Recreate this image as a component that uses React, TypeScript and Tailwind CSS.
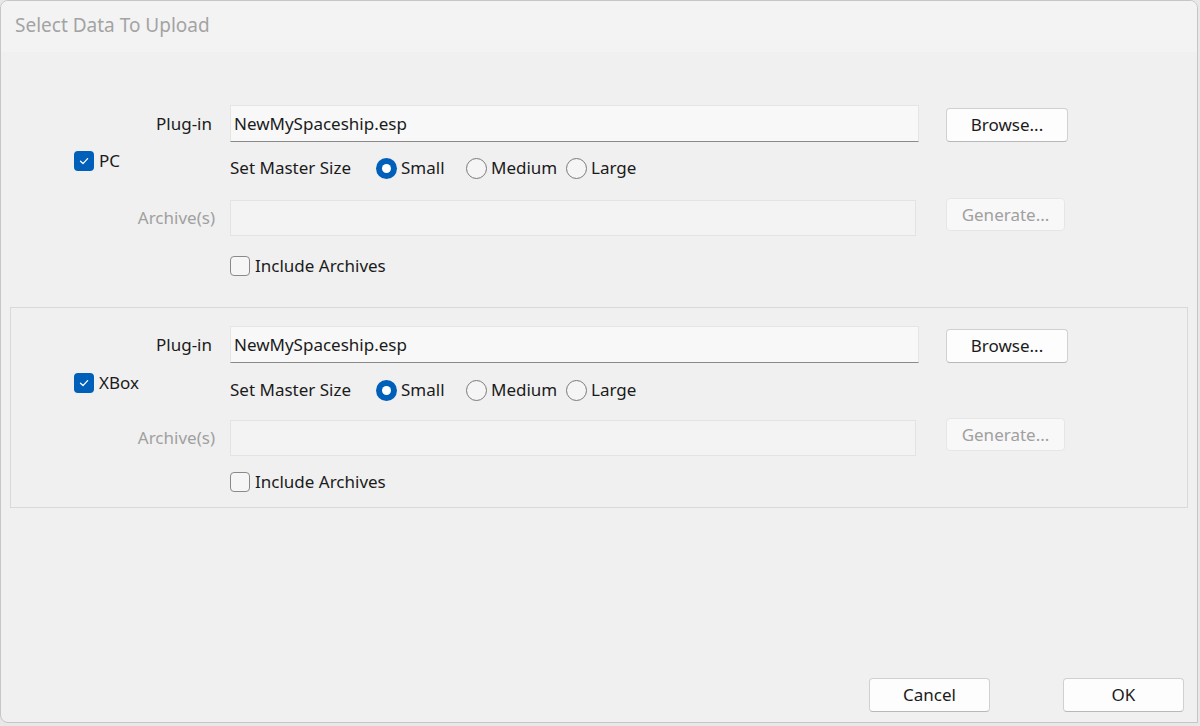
import React from "react";

const FONT = { fontFamily: '"Noto Sans", "Open Sans", sans-serif' };

function Check({ checked }: { checked: boolean }) {
  if (checked) {
    return (
      <span className="flex h-[20px] w-[20px] items-center justify-center rounded-[4px] bg-[#005fb8]">
        <svg width="12" height="12" viewBox="0 0 12 12" fill="none">
          <path d="M2.5 6.3 L5 8.6 L9.6 3.6" stroke="#ffffff" strokeWidth="1.3" strokeLinecap="round" strokeLinejoin="round" />
        </svg>
      </span>
    );
  }
  return <span className="block h-[20px] w-[20px] rounded-[4px] border border-[#8a8a8a] bg-[#f6f6f6]" />;
}

function Radio({ label, selected }: { label: string; selected?: boolean }) {
  return (
    <span className="flex items-center gap-[4px]">
      {selected ? (
        <span className="flex h-[21px] w-[21px] items-center justify-center rounded-full bg-[#005fb8]">
          <span className="block h-[9px] w-[9px] rounded-full bg-white" />
        </span>
      ) : (
        <span className="block h-[21px] w-[21px] rounded-full border border-[#7a7a7a] bg-[#f5f5f5]" />
      )}
      <span>{label}</span>
    </span>
  );
}

function Button({ children, disabled, w }: { children: React.ReactNode; disabled?: boolean; w: string }) {
  return (
    <button
      className={
        disabled
          ? `h-[33px] ${w} rounded-[4px] border border-[#e6e6e6] bg-[#f8f8f8] text-[#a0a0a0]`
          : `h-[34px] ${w} rounded-[4px] border border-[#d0d0d0] border-b-[#b8b8b8] bg-[#fdfdfd] text-[#1b1b1b]`
      }
    >
      {children}
    </button>
  );
}

function Platform({ name, bordered }: { name: string; bordered?: boolean }) {
  return (
    <div
      className={
        bordered
          ? "border border-[#d9d9d9] pt-[18px] pb-[10px]"
          : "border border-transparent pt-[18px] pb-[10px]"
      }
    >
      {/* plug-in */}
      <div className="flex h-[37px] items-center">
        <div className="w-[219px] pr-[18px] text-right">Plug-in</div>
        <div className="flex h-[37px] w-[689px] items-center border border-[#e5e5e5] border-b-[#8a8a8a] bg-[#f8f8f8] pl-[3px]">
          NewMySpaceship.esp
        </div>
        <div className="ml-[27px] pt-[2px]">
          <Button w="w-[122px]">Browse...</Button>
        </div>
      </div>

      {/* master size */}
      <div className={bordered ? "mt-[11px] flex h-[32px] items-center" : "mt-[10px] flex h-[32px] items-center"}>
        <div className="flex w-[219px] -translate-y-[7px] items-center gap-[5px] pl-[63px]">
          <Check checked />
          <span>{name}</span>
        </div>
        <span className="w-[146px]">Set Master Size</span>
        <div className="flex items-center">
          <div className="w-[90px]">
            <Radio label="Small" selected />
          </div>
          <div className="w-[100px]">
            <Radio label="Medium" />
          </div>
          <Radio label="Large" />
        </div>
      </div>

      {/* archives */}
      <div className={bordered ? "mt-[12px] flex items-start" : "mt-[14px] flex items-start"}>
        <div className="mt-[2px] flex h-[36px] w-[219px] items-center justify-end pr-[15px] text-[#a0a0a0]">
          Archive(s)
        </div>
        <div className="mt-[2px] h-[36px] w-[686px] border border-[#e3e3e3] bg-[#f3f3f3]" />
        <div className="ml-[30px]">
          <Button w="w-[119px]" disabled>
            Generate...
          </Button>
        </div>
      </div>

      {/* include */}
      <div className={bordered ? "mt-[11px] flex h-[30px] items-center" : "mt-[15px] flex h-[30px] items-center"}>
        <div className="w-[219px]" />
        <span className="flex items-center gap-[5px]">
          <Check checked={false} />
          <span>Include Archives</span>
        </span>
      </div>
    </div>
  );
}

export default function App() {
  return (
    <div className="h-[726px] w-[1200px] overflow-hidden bg-[#e8e8e8] text-[17px] text-[#1b1b1b]" style={FONT}>
      <div className="flex h-[723px] w-[1198px] flex-col overflow-hidden rounded-t-[8px] rounded-bl-[8px] border border-[#c6c6c6] bg-[#f0f0f0]">
        <div className="flex h-[51px] items-center bg-[#f3f3f3] pl-[14px] pb-[2px] text-[19px] text-[#a3a3a3]">
          Select Data To Upload
        </div>

        <div className="mt-[34px] px-[9px]">
          <Platform name="PC" />
          <div className="mt-[15px]">
            <Platform name="XBox" bordered />
          </div>
        </div>

        <div className="mt-auto mb-[10px] flex justify-end gap-[73px] pr-[13px]">
          <Button w="w-[121px]">Cancel</Button>
          <Button w="w-[121px]">OK</Button>
        </div>
      </div>
    </div>
  );
}
